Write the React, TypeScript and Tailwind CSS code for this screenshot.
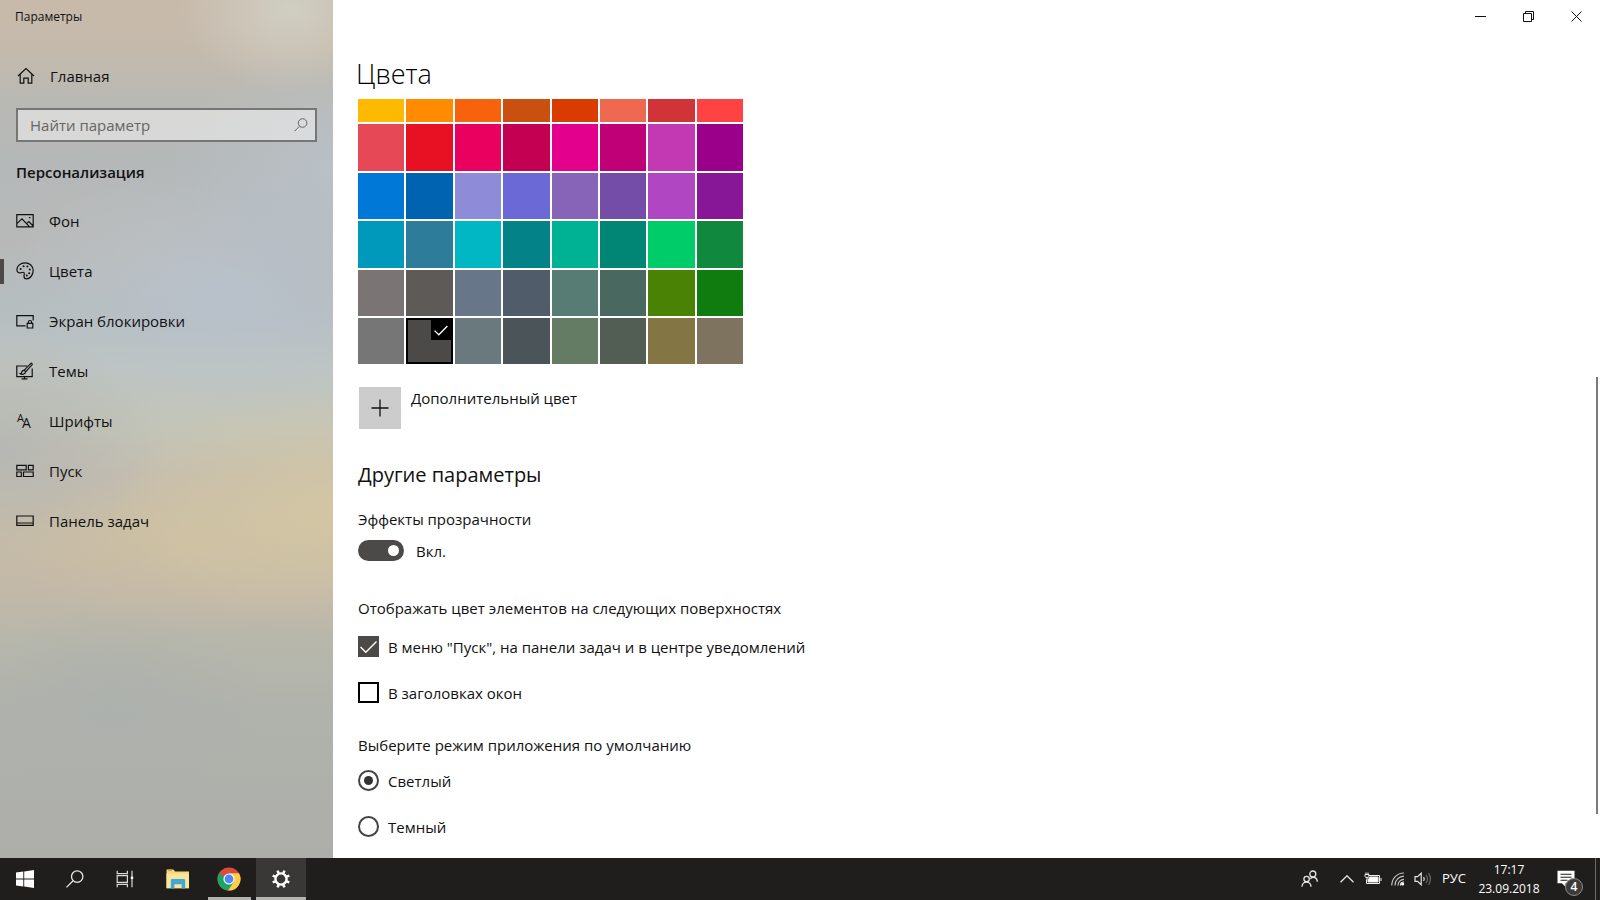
import React, { useState } from 'react';
import clsx from 'clsx';

type IconProps = { children: React.ReactNode; className?: string };

const NavIcon: React.FC<IconProps> = ({ children, className }) => (
  <svg
    viewBox="0 0 18 18"
    className={clsx('h-[18px] w-[18px] shrink-0', className)}
    fill="none"
    stroke="currentColor"
    strokeWidth="1.2"
    aria-hidden="true"
  >
    {children}
  </svg>
);

const navItems = [
  {
    id: 'background',
    label: 'Фон',
    icon: (
      <NavIcon>
        <path d="M.8 2.7h16.4v12.2H.8zM.8 11.6 6 6.8l7.6 8M10.6 11.6l2.2-2 4.4 4.4" />
        <path d="M13 5.6h1.4" />
      </NavIcon>
    ),
  },
  {
    id: 'colors',
    label: 'Цвета',
    icon: (
      <NavIcon>
        <path d="M9 .9c4.6 0 8.2 3.2 8.2 7.7 0 4.8-3.4 8.2-6.6 8.2-2 0-2.6-1.4-2.6-2.6 0-1.8.7-2.4.1-3.4-.8-1.3-2.1-.1-3.5.1C2.600 11.200.9 10 .9 7.700.9 4 4.500.9 9 .9z" />
        <g fill="currentColor" stroke="none">
          <circle cx="4.6" cy="7" r="1" />
          <circle cx="7.6" cy="4.3" r="1" />
          <circle cx="11.4" cy="4.6" r="1" />
          <circle cx="13.8" cy="7.6" r="1" />
          <circle cx="13.2" cy="11.2" r="1" />
          <circle cx="10.8" cy="13.6" r="1" />
        </g>
      </NavIcon>
    ),
  },
  {
    id: 'lockscreen',
    label: 'Экран блокировки',
    icon: (
      <NavIcon>
        <path d="M9.6 13.8H.8V3.6h16.4v5M11.200 11.400h5.600v4.600h-5.600zM12.400 11.400V10c0-2 3.200-2 3.200 0v1.400" />
      </NavIcon>
    ),
  },
  {
    id: 'themes',
    label: 'Темы',
    icon: (
      <NavIcon>
        <path d="M11.400 4H.8v10.600h15.400V6.400M8.500 14.600v2.200M5.500 16.800h6" />
        <path d="M15.800 1.400c.8.6.5 1.200 0 1.800L9.800 9.700 8.200 8.200l6.200-6.400c.4-.5.900-.8 1.400-.4zM8 8.500c-1.400-.2-2.200.8-2.300 1.900-.1.900-.6 1.200-1.300 1.300 1.600 1.100 4.900.8 5.100-1.800" />
      </NavIcon>
    ),
  },
  {
    id: 'fonts',
    label: 'Шрифты',
    icon: (
      <span
        aria-hidden="true"
        className="flex h-[18px] w-[18px] shrink-0 items-start pl-px leading-none"
      >
        <span className="text-[11px] leading-[11px]">A</span>
        <span className="-ml-0.5 pt-1 text-[14px] leading-[14px]">A</span>
      </span>
    ),
  },
  {
    id: 'start',
    label: 'Пуск',
    icon: (
      <NavIcon>
        <path d="M.8 3.300h9.400v4.500H.8zM12.400 3.300h4.800v4.500h-4.800zM.8 10h4.500v4.500H.8zM7.500 10h9.700v4.500H7.500z" />
      </NavIcon>
    ),
  },
  {
    id: 'taskbar',
    label: 'Панель задач',
    icon: (
      <NavIcon>
        <path d="M.8 4h16.400v9.400H.8zM.8 11h16.400" />
      </NavIcon>
    ),
  },
];

const swatches = [
  'bg-[#ffb900]', 'bg-[#ff8c00]', 'bg-[#f7630c]', 'bg-[#ca5010]', 'bg-[#da3b01]', 'bg-[#ef6950]', 'bg-[#d13438]', 'bg-[#ff4343]',
  'bg-[#e74856]', 'bg-[#e81123]', 'bg-[#ea005e]', 'bg-[#c30052]', 'bg-[#e3008c]', 'bg-[#bf0077]', 'bg-[#c239b3]', 'bg-[#9a0089]',
  'bg-[#0078d7]', 'bg-[#0063b1]', 'bg-[#8e8cd8]', 'bg-[#6b69d6]', 'bg-[#8764b8]', 'bg-[#744da9]', 'bg-[#b146c2]', 'bg-[#881798]',
  'bg-[#0099bc]', 'bg-[#2d7d9a]', 'bg-[#00b7c3]', 'bg-[#038387]', 'bg-[#00b294]', 'bg-[#018574]', 'bg-[#00cc6a]', 'bg-[#10893e]',
  'bg-[#7a7574]', 'bg-[#5d5a58]', 'bg-[#68768a]', 'bg-[#515c6b]', 'bg-[#567c73]', 'bg-[#486860]', 'bg-[#498205]', 'bg-[#107c10]',
  'bg-[#767676]', 'bg-[#4c4a48]', 'bg-[#69797e]', 'bg-[#4a5459]', 'bg-[#647c64]', 'bg-[#525e54]', 'bg-[#847545]', 'bg-[#7e735f]',
];

const Sidebar: React.FC = () => {
  const [active, setActive] = useState('colors');

  return (
    <aside className="flex w-[333px] shrink-0 flex-col bg-[radial-gradient(ellipse_110px_80px_at_290px_10px,#d0cec2,transparent),radial-gradient(ellipse_220px_130px_at_220px_290px,#b8c2cecc,transparent),radial-gradient(ellipse_160px_120px_at_333px_170px,#bac2cacc,transparent),radial-gradient(ellipse_140px_80px_at_140px_250px,#bfbdb899,transparent),radial-gradient(ellipse_220px_120px_at_333px_510px,#d4c7a4e6,transparent),radial-gradient(ellipse_180px_80px_at_190px_550px,#cfc1a299,transparent),radial-gradient(ellipse_170px_120px_at_0px_450px,#b5b6b3e6,transparent),radial-gradient(ellipse_150px_100px_at_110px_700px,#aab0ad99,transparent),linear-gradient(to_bottom,#c8baab_0%,#c4baac_6%,#bab9b3_11%,#b4b8b8_19%,#b6b9b8_28%,#b6bebf_37%,#bfc5c1_43%,#c3c5b8_50%,#c5beaf_55%,#c9bda5_62%,#c2b8a9_69%,#b7b7ab_75%,#b0b2ac_83%,#adaea9_100%)]">
      <div className="flex h-[34px] items-center pl-[15px] text-xs">Параметры</div>

      <a href="#home" className="mt-[22px] flex h-10 items-center gap-[15px] pl-[17px]">
        <NavIcon>
          <path d="M1 9 9 1.600 17 9M3.200 7.400v8.800h3.600v-5h4.400v5h3.600V7.400" />
        </NavIcon>
        Главная
      </a>

      <div className="mx-4 mt-3 flex h-[34px] items-center border-2 border-[#767674] bg-white/45 pr-[7px] pl-3">
        <input
          type="search"
          aria-label="Найти параметр"
          placeholder="Найти параметр"
          className="min-w-0 flex-1 bg-transparent outline-none placeholder:text-[#666664]"
        />
        <svg viewBox="0 0 14 14" className="h-3.5 w-3.5 text-[#666664]" fill="none" stroke="currentColor" aria-hidden="true">
          <circle cx="8.6" cy="5" r="4.3" />
          <path d="M5.5 8.200.6 13.200" />
        </svg>
      </div>

      <h2 className="mt-[18px] pl-4 leading-6 font-semibold">Персонализация</h2>

      <nav className="mt-3">
        <ul>
          {navItems.map((item) => (
            <li key={item.id}>
              <a
                href={`#${item.id}`}
                onClick={() => setActive(item.id)}
                aria-current={active === item.id ? 'page' : undefined}
                className="flex h-[50px] items-center"
              >
                <span className={clsx('h-[25px] w-1', active === item.id && 'bg-[#4c4a48]')} />
                <span className="flex items-center gap-[15px] pl-3">
                  {item.icon}
                  {item.label}
                </span>
              </a>
            </li>
          ))}
        </ul>
      </nav>
    </aside>
  );
};

const WindowControls: React.FC = () => (
  <div className="flex h-8 shrink-0 justify-end">
    <button type="button" aria-label="Свернуть" className="flex w-12 items-center justify-center">
      <svg viewBox="0 0 11 11" className="h-[11px] w-[11px]" fill="none" stroke="currentColor">
        <path d="M0 5.500h11" />
      </svg>
    </button>
    <button type="button" aria-label="Восстановить" className="flex w-12 items-center justify-center">
      <svg viewBox="0 0 11 11" className="h-[11px] w-[11px]" fill="none" stroke="currentColor">
        <path d="M.5 2.500h8v8h-8zM2.500 2.500v-2h8v8h-2" />
      </svg>
    </button>
    <button type="button" aria-label="Закрыть" className="flex w-12 items-center justify-center">
      <svg viewBox="0 0 11 11" className="h-[11px] w-[11px]" fill="none" stroke="currentColor">
        <path d="m.5.5 10 10M10.500.5l-10 10" />
      </svg>
    </button>
  </div>
);

type CheckProps = { label: string; checked: boolean; onChange: (value: boolean) => void };

const CheckBox: React.FC<CheckProps> = ({ label, checked, onChange }) => (
  <label className="flex h-[21px] items-center gap-[9px]">
    <span className="grid h-[21px] w-[21px]">
      <input
        type="checkbox"
        checked={checked}
        onChange={(e) => onChange(e.target.checked)}
        className="col-start-1 row-start-1 h-[21px] w-[21px] appearance-none border-2 border-black checked:border-[#4c4a48] checked:bg-[#4c4a48]"
      />
      {checked && (
        <svg viewBox="0 0 21 21" className="pointer-events-none col-start-1 row-start-1 text-white" fill="none" stroke="currentColor" strokeWidth="1.4">
          <path d="m2.500 11 5.300 5.200L18.500 5.500" />
        </svg>
      )}
    </span>
    {label}
  </label>
);

type RadioProps = { label: string; checked: boolean; onSelect: () => void };

const Radio: React.FC<RadioProps> = ({ label, checked, onSelect }) => (
  <label className="flex h-[21px] items-center gap-[9px]">
    <input
      type="radio"
      name="app-mode"
      checked={checked}
      onChange={onSelect}
      className="flex h-[21px] w-[21px] appearance-none items-center justify-center rounded-full border-2 border-[#444342] before:h-[9px] before:w-[9px] before:rounded-full checked:before:bg-[#333231]"
    />
    {label}
  </label>
);

const ColorSettings: React.FC = () => {
  const [accent, setAccent] = useState('bg-[#4c4a48]');
  const [transparency, setTransparency] = useState(true);
  const [onTaskbar, setOnTaskbar] = useState(true);
  const [onTitles, setOnTitles] = useState(false);
  const [mode, setMode] = useState('light');

  return (
    <main className="flex min-w-0 flex-1 flex-col bg-white">
      <WindowControls />
      <h1 className="mt-[26px] mb-[9px] pl-[23px] text-[27px] leading-8 font-light text-black">Цвета</h1>

      <div className="relative min-h-0 flex-1 overflow-hidden pl-[25px]">
        <div className="-mt-[23px] grid w-[385px] grid-cols-8 gap-[2px]">
          {swatches.map((color) => (
            <button
              key={color}
              type="button"
              aria-label={color.slice(4, -1)}
              aria-pressed={accent === color}
              onClick={() => setAccent(color)}
              className={clsx('flex aspect-square justify-end', color, accent === color && 'border-2 border-black')}
            >
              {accent === color && (
                <span className="flex h-5 w-5 items-center justify-center bg-black text-white">
                  <svg viewBox="0 0 14 14" className="h-3.5 w-3.5" fill="none" stroke="currentColor" strokeWidth="1.3">
                    <path d="m.6 7.600 4.200 4.200L13.400 3" />
                  </svg>
                </span>
              )}
            </button>
          ))}
        </div>

        <label className="mt-[23px] flex w-fit items-start gap-2.5 pl-px">
          <button type="button" className="flex h-[42px] w-[42px] items-center justify-center bg-[#cccccc]" aria-label="Дополнительный цвет">
            <svg viewBox="0 0 18 18" className="h-[18px] w-[18px]" fill="none" stroke="currentColor" strokeWidth="1.3">
              <path d="M9 .5v17M.5 9h17" />
            </svg>
          </button>
          <span className="leading-[22px]">Дополнительный цвет</span>
        </label>

        <h2 className="mt-8 text-xl leading-7">Другие параметры</h2>

        <p id="transparency" className="mt-5 leading-5">Эффекты прозрачности</p>
        <label className="mt-[11px] flex h-[21px] w-fit items-center gap-3">
          <input
            type="checkbox"
            role="switch"
            aria-describedby="transparency"
            checked={transparency}
            onChange={(e) => setTransparency(e.target.checked)}
            className="flex h-[21px] w-[46px] appearance-none items-center rounded-full border-2 border-[#4c4a48] px-[3px] before:h-[11px] before:w-[11px] before:rounded-full before:bg-[#4c4a48] checked:justify-end checked:bg-[#4c4a48] checked:before:bg-white"
          />
          {transparency ? 'Вкл.' : 'Откл.'}
        </label>

        <p className="mt-[37px] leading-5">Отображать цвет элементов на следующих поверхностях</p>
        <div className="mt-[18px] flex flex-col items-start gap-[25px]">
          <CheckBox label={'В меню "Пуск", на панели задач и в центре уведомлений'} checked={onTaskbar} onChange={setOnTaskbar} />
          <CheckBox label="В заголовках окон" checked={onTitles} onChange={setOnTitles} />
        </div>

        <p className="mt-8 leading-5">Выберите режим приложения по умолчанию</p>
        <div className="mt-[15px] flex flex-col items-start gap-[25px]">
          <Radio label="Светлый" checked={mode === 'light'} onSelect={() => setMode('light')} />
          <Radio label="Темный" checked={mode === 'dark'} onSelect={() => setMode('dark')} />
        </div>

        <div className="absolute top-[278px] right-0.5 bottom-11 w-0.5 bg-[#7a7a7a]" />
      </div>
    </main>
  );
};

const TaskButton: React.FC<{ label: string; className?: string; children: React.ReactNode }> = ({ label, className, children }) => (
  <button type="button" aria-label={label} className={clsx('flex h-full items-center justify-center', className)}>
    {children}
  </button>
);

const Taskbar: React.FC = () => (
  <footer className="flex h-[42px] shrink-0 items-stretch bg-[#1f1e1c] text-white">
    <TaskButton label="Пуск" className="w-[50px]">
      <svg viewBox="0 0 18 18" className="h-[18px] w-[18px]" fill="currentColor">
        <path d="M0 2.600 7.300 1.600v7H0zM8.200 1.500 18 .1v8.500H8.200zM0 9.500h7.300v7L0 15.400zM8.200 9.500H18v8.400l-9.800-1.400z" />
      </svg>
    </TaskButton>
    <TaskButton label="Поиск" className="w-[50px]">
      <svg viewBox="0 0 18 18" className="h-[18px] w-[18px]" fill="none" stroke="#e6e6e6" strokeWidth="1.3">
        <circle cx="11.2" cy="6.6" r="5.7" />
        <path d="M7.100 10.700.4 17.400" />
      </svg>
    </TaskButton>
    <TaskButton label="Представление задач" className="w-[50px]">
      <svg viewBox="0 0 18 18" className="h-[18px] w-[18px]" fill="none" stroke="#d8d8d8" strokeWidth="1.2">
        <path d="M1.200.8v2.800h10.200V.8M1.200 17.200v-2.800h10.200v2.800M1.200 5.600h10.200v6.800H1.200zM16 .8v16.400" />
        <path d="M14.800 7.800h2.400" stroke="#fff" strokeWidth="2.4" />
      </svg>
    </TaskButton>
    <TaskButton label="Проводник" className="ml-[3px] w-[50px]">
      <svg viewBox="0 0 24 20" className="h-5 w-6">
        <path d="M.5.500h7l1.500 2h14v16.700H.5z" fill="#f6d778" />
        <path d="M.5 4.500h22.500v14.700H.5z" fill="#fbe59b" />
        <path d="M2 .5h4v1.600H2z" fill="#e8a33d" />
        <path d="M4.800 11.600c0-1 .6-1.500 1.500-1.500h11.400c.9 0 1.500.5 1.500 1.500v7.900h-3.600v-4.200H8.400v4.200H4.800z" fill="#3fa9d6" />
      </svg>
    </TaskButton>
    <TaskButton label="Google Chrome" className="mx-[1px] w-[50px]">
      <span className="flex h-full w-[43px] items-center justify-center border-b-3 border-[#b4b2ae] pt-[3px]">
        <svg viewBox="0 0 24 24" className="h-6 w-6">
          <circle cx="12" cy="12" r="11.5" fill="#dd4b3e" />
          <path d="M2.040 6.250A11.500 11.500 0 0 0 11 23.460L17 14.900 12 12z" fill="#1da462" />
          <path d="M21.960 6.250A11.500 11.500 0 0 1 11 23.460L17 14.700 12 6.250z" fill="#ffcd46" />
          <circle cx="12" cy="12" r="5.6" fill="#f4f4f4" />
          <circle cx="12" cy="12" r="4.4" fill="#4c8bf5" />
        </svg>
      </span>
    </TaskButton>
    <TaskButton label="Параметры" className="ml-px w-[50px] border-b-3 border-[#b4b2ae] bg-[#393836] pt-[3px]">
      <svg viewBox="0 0 20 20" className="h-5 w-5" fill="none" stroke="currentColor">
        <circle cx="10" cy="10" r="5.6" strokeWidth="2.400" />
        <path
          d="M15.700 12.400 18.300 13.400M12.400 15.700l1 2.700M7.600 15.700l-1 2.700M4.300 12.400l-2.600 1M4.300 7.600l-2.600-1M7.600 4.300l-1-2.700M12.400 4.300l1-2.700M15.700 7.600l2.600-1"
          strokeWidth="2.6"
        />
      </svg>
    </TaskButton>

    <div className="ml-auto flex items-stretch">
      <TaskButton label="Люди" className="w-11">
        <svg viewBox="0 0 18 18" className="h-[18px] w-[18px]" fill="none" stroke="#e6e6e6" strokeWidth="1.3">
          <circle cx="11.8" cy="4" r="3" />
          <circle cx="5.6" cy="9" r="2.7" />
          <path d="M1 16.800c0-6.200 9-6.200 9 0M9.300 8.800c2.800-2.900 7-1.500 7 3" />
        </svg>
      </TaskButton>
      <TaskButton label="Показать скрытые значки" className="w-[29px]">
        <svg viewBox="0 0 14 8" className="h-2 w-3.5" fill="none" stroke="#e6e6e6" strokeWidth="1.3">
          <path d="m.5 7.300 6.500-6.500 6.500 6.500" />
        </svg>
      </TaskButton>
      <TaskButton label="Батарея" className="w-[23px]">
        <svg viewBox="0 0 18 14" className="h-3.5 w-[18px]" fill="none" stroke="#f0f0f0">
          <path d="M4.500 3.500h11v8h-13v-4M17 6v3" />
          <path d="M6 5h8v5H4V8z" fill="#fff" />
          <path d="M1 2.500h4v2.200c0 1-4 1-4 0zM2 .5v2M4 .5v2M3 5v3" />
        </svg>
      </TaskButton>
      <TaskButton label="Сеть" className="w-[27px]">
        <svg viewBox="0 0 14 14" className="h-3.5 w-3.5" fill="none" stroke="#9a9a9a" strokeWidth="1.2">
          <path d="M.8 13.400C.8 6.500 6 1 13 1M4 13.400c0-5 3.800-9.200 9-9.200M7 13.400c0-3.400 2.600-6 6-6" stroke="#c4c4c4" />
          <circle cx="11.6" cy="12" r="1.6" fill="#fff" stroke="none" />
          <path d="M9.400 13.400c0-2 1.600-3.400 3.600-3.400" stroke="#e6e6e6" />
        </svg>
      </TaskButton>
      <TaskButton label="Громкость" className="w-[23px]">
        <svg viewBox="0 0 18 14" className="h-3.5 w-[18px]" fill="none" stroke="#e6e6e6" strokeWidth="1.2">
          <path d="M1 4.700h2.600L7.200 1.200v11.600L3.600 9.300H1z" />
          <path d="M9.600 5c.8 1.200.8 2.800 0 4" />
          <path d="M12 3c1.800 2.300 1.800 5.700 0 8M14.500 1.200c2.600 3.400 2.600 8.200 0 11.600" stroke="#6a6a6a" />
        </svg>
      </TaskButton>
      <button type="button" className="w-10 text-[13px]">РУС</button>
      <div className="flex w-[70px] flex-col justify-center text-center text-xs leading-[19px]">
        <time>17:17</time>
        <time>23.09.2018</time>
      </div>
      <TaskButton label="Центр уведомлений" className="relative w-[51px] pr-2">
        <svg viewBox="0 0 18 18" className="h-[18px] w-[18px]">
          <path d="M.5.800h17v12.400H8.500v3.600l-3.600-3.600H.5z" fill="#fff" />
          <path d="M3.500 4.300h11M3.500 7.300h11M3.500 10.300h7" stroke="#1f1e1c" strokeWidth="1.1" />
        </svg>
        <span className="absolute right-3 bottom-1 flex h-[18px] w-[18px] items-center justify-center rounded-full border border-[#8a8a8a] bg-[#3c3b39] text-xs font-semibold">
          4
        </span>
      </TaskButton>
      <div className="w-[5px] border-l border-[#6b6b69]" />
    </div>
  </footer>
);

const App: React.FC = () => (
  <div className="flex h-screen flex-col overflow-hidden font-['Open_Sans','Noto_Sans',sans-serif] text-[15px] text-[#111111]">
    <div className="flex min-h-0 flex-1">
      <Sidebar />
      <ColorSettings />
    </div>
    <Taskbar />
  </div>
);

export default App;
